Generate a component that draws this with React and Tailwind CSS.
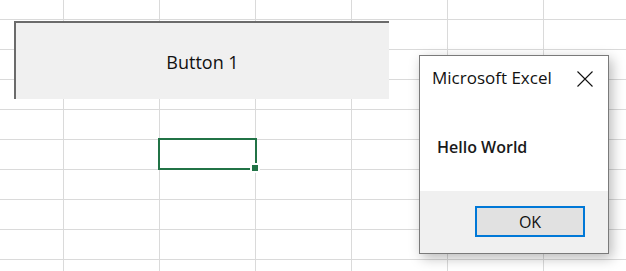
const cols = [64, 96, 96, 96, 96, 96, 96, 96];
const rows = [20, 30, 30, 30, 30, 30, 30, 30, 30, 30];

function Sheet() {
  return (
    <div className="grid grid-cols-[64px_repeat(7,96px)] grid-rows-[20px_repeat(9,30px)]">
      {rows.map((_, r) =>
        cols.map((_, c) => (
          <div key={`${r}-${c}`} className="border-r border-b border-[#dadada]" />
        ))
      )}
    </div>
  );
}

function MsgBox() {
  return (
    <div className="absolute left-[419px] top-[55px] flex h-[199px] w-[190px] flex-col border border-[#7a7a7a] bg-white shadow-[3px_4px_12px_rgba(0,0,0,0.28)] font-['Open_Sans',sans-serif]">
      {/* Title bar */}
      <div className="flex h-[40px] items-start justify-between pl-[12px] pr-[15px] pt-[10px]">
        <span className="text-[17px] leading-[23px] text-[#111]">Microsoft Excel</span>
        <svg width="16" height="16" viewBox="0 0 16 16" className="mt-[5px]">
          <path d="M0.5 0.5L15.5 15.5M15.5 0.5L0.5 15.5" stroke="#111" strokeWidth="1.1" fill="none" />
        </svg>
      </div>

      {/* Message */}
      <div className="flex-1 pl-[17px] pt-[39px]">
        <span className="text-[16px] font-semibold leading-[22px] text-[#1a1a1a]">Hello World</span>
      </div>

      {/* Buttons */}
      <div className="flex h-[62px] justify-end bg-[#f0f0f0] pr-[23px] pt-[15px]">
        <div className="flex h-[31px] w-[110px] items-center justify-center border-2 border-[#0078d7] bg-[#e1e1e1] text-[16px] text-[#111]">
          OK
        </div>
      </div>
    </div>
  );
}

export default function App() {
  return (
    <div className="relative h-[271px] w-[626px] overflow-hidden bg-white">
      <Sheet />

      {/* Form button on the sheet */}
      <div className="absolute left-[14px] top-[21px] flex h-[78px] w-[375px] items-center justify-center border-l-2 border-t-2 border-[#6b6b6b] bg-[#f0f0f0] pt-[3px] font-['Open_Sans',sans-serif] text-[18px] text-[#111]">
        Button 1
      </div>

      {/* Active cell */}
      <div className="absolute left-[158px] top-[138px] h-[32px] w-[99px] border-2 border-[#217346]" />
      <div className="absolute left-[250px] top-[163px] h-[10px] w-[10px] border-2 border-white bg-[#217346]" />

      <MsgBox />
    </div>
  );
}
